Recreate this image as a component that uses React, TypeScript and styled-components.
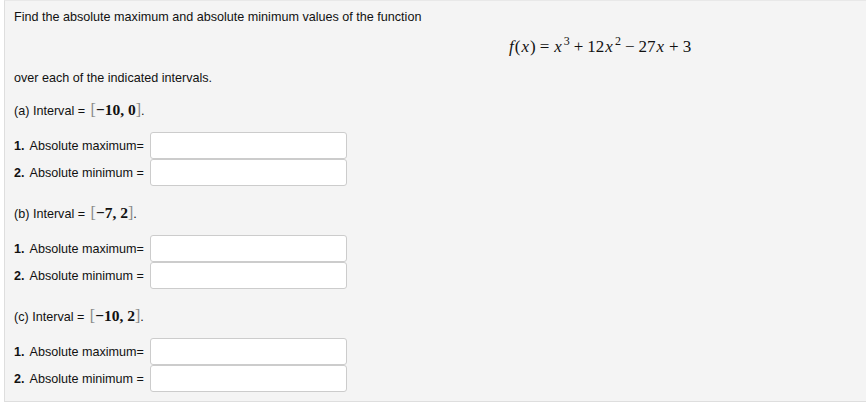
import React from 'react';
import styled, { createGlobalStyle } from 'styled-components';

const GlobalStyle = createGlobalStyle`
  body {
    margin: 0;
    background: #fff;
    overflow: hidden;
    font-family: "Liberation Sans", Arial, sans-serif;
    color: #111;
  }
`;

const Panel = styled.div`
  margin-left: 4px;
  margin-right: -20px;
  background: #f4f4f4;
  border: 1px solid #dedede;
  border-top-color: #e8e8e8;
  padding: 8px 9px 9px 9px;
  font-size: 12.6px;
  line-height: 16px;
`;

const Text = styled.div<{ $top?: number }>`
  margin-top: ${(p) => p.$top ?? 0}px;
  height: 16px;
  white-space: nowrap;
`;

const Formula = styled.div`
  margin-top: 12px;
  margin-left: 494px;
  height: 20px;
  line-height: 20px;
  font-family: "Liberation Serif", "Times New Roman", serif;
  font-size: 17px;
  white-space: nowrap;
`;

const Var = styled.span`
  font-style: italic;
  margin: 0 1px;
`;

const Sup = styled.sup`
  font-size: 12px;
  vertical-align: 7px;
  line-height: 0;
  margin-left: 1px;
`;

const Op = styled.span`
  margin: 0 4px;
`;

const Section = styled.div`
  margin-top: 16px;
  & + & {
    margin-top: 19px;
  }
`;

const Heading = styled.div`
  height: 16px;
  white-space: nowrap;
`;

const Interval = styled.span`
  font-family: "Liberation Serif", "Times New Roman", serif;
  font-size: 15.5px;
  font-weight: bold;
  margin-left: 2px;
`;

const Bracket = styled.span`
  font-weight: normal;
  color: #888;
  font-size: 16px;
`;

const Rows = styled.div`
  margin-top: 14px;
`;

const Row = styled.div`
  display: flex;
  align-items: center;
  height: 27px;
`;

const Label = styled.label`
  width: 136px;
  white-space: nowrap;
`;

const Num = styled.b`
  margin-right: 5px;
`;

const Input = styled.input`
  box-sizing: border-box;
  width: 197px;
  height: 27px;
  background: #fff;
  border: 1px solid #cccccc;
  border-radius: 3px;
  outline: none;
`;

interface IProps {
  letter: string;
  from: string;
  to: string;
}

const IntervalSection: React.FC<IProps> = (props) => {
  return (
    <Section>
      <Heading>
        ({props.letter}) Interval ={' '}
        <Interval>
          <Bracket>[</Bracket>−{props.from}, {props.to}
          <Bracket>]</Bracket>
        </Interval>
        .
      </Heading>
      <Rows>
        <Row>
          <Label>
            <Num>1.</Num>Absolute maximum=
          </Label>
          <Input type="text" />
        </Row>
        <Row>
          <Label>
            <Num>2.</Num>Absolute minimum =
          </Label>
          <Input type="text" />
        </Row>
      </Rows>
    </Section>
  );
};

const App: React.FC = () => {
  return (
    <>
      <GlobalStyle />
      <Panel>
        <Text>Find the absolute maximum and absolute minimum values of the function</Text>
        <Formula>
          <Var>f</Var>(<Var>x</Var>)<Op>=</Op>
          <Var>x</Var>
          <Sup>3</Sup>
          <Op>+</Op>12<Var>x</Var>
          <Sup>2</Sup>
          <Op>−</Op>27<Var>x</Var>
          <Op>+</Op>3
        </Formula>
        <Text $top={13}>over each of the indicated intervals.</Text>
        <IntervalSection letter="a" from="10" to="0" />
        <IntervalSection letter="b" from="7" to="2" />
        <IntervalSection letter="c" from="10" to="2" />
      </Panel>
    </>
  );
};

export default App;
